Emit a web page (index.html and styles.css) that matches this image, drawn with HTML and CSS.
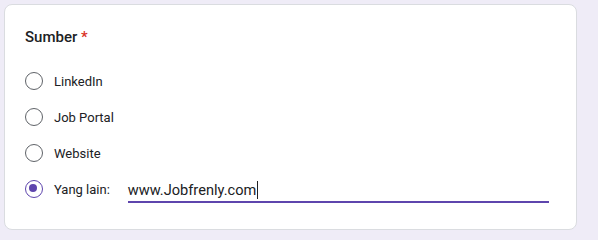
FILE: index.html
```html
<!DOCTYPE html>
<html>
<head>
<meta charset="utf-8">
<link rel="stylesheet" href="styles.css">
</head>
<body>
<div class="card">
  <div class="title">Sumber <span class="req">*</span></div>
  <div class="options">
    <div class="opt"><span class="radio"></span><span class="label">LinkedIn</span></div>
    <div class="opt"><span class="radio"></span><span class="label">Job Portal</span></div>
    <div class="opt"><span class="radio"></span><span class="label">Website</span></div>
    <div class="opt"><span class="radio checked"></span><span class="label">Yang lain:</span>
      <div class="other"><span class="val">www.Jobfrenly.com</span><span class="caret"></span></div>
    </div>
  </div>
</div>
</body>
</html>
```
FILE: styles.css
```css
html, body { margin: 0; padding: 0; }
body {
  width: 598px; height: 237px;
  background: #efecf7;
  font-family: Roboto, "Noto Sans", sans-serif;
  padding: 4px 0 0 4px;
  box-sizing: border-box;
}
.card {
  width: 573px; height: 226px;
  box-sizing: border-box;
  background: #fff;
  border: 1px solid #dadce0;
  border-radius: 8px;
  padding: 22px 0 0 20px;
}
.title {
  font-size: 15px; font-weight: 500; color: #202124;
  line-height: 20px;
}
.req { color: #d93025; }
.options { display: flex; flex-direction: column; gap: 16px; margin-top: 24px; }
.opt { display: flex; align-items: center; height: 20px; }
.radio {
  width: 18px; height: 18px; box-sizing: border-box;
  border: 1.6px solid #5f6368; border-radius: 50%;
  flex: none; position: relative;
}
.radio.checked { border-color: #5e45ad; }
.radio.checked::after {
  content: ""; position: absolute; left: 3.4px; top: 3.4px;
  width: 8px; height: 8px; border-radius: 50%; background: #5e45ad;
}
.label { margin-left: 11px; font-size: 13px; color: #202124; }
.other {
  margin-left: 18px; width: 421px; height: 22px;
  border-bottom: 2px solid #5e45ad;
  display: flex; align-items: center; margin-top: 4px;
  font-size: 14.6px; color: #202124;
}
.caret { width: 1px; height: 18px; background: #202124; margin-left: 1px; }
```
